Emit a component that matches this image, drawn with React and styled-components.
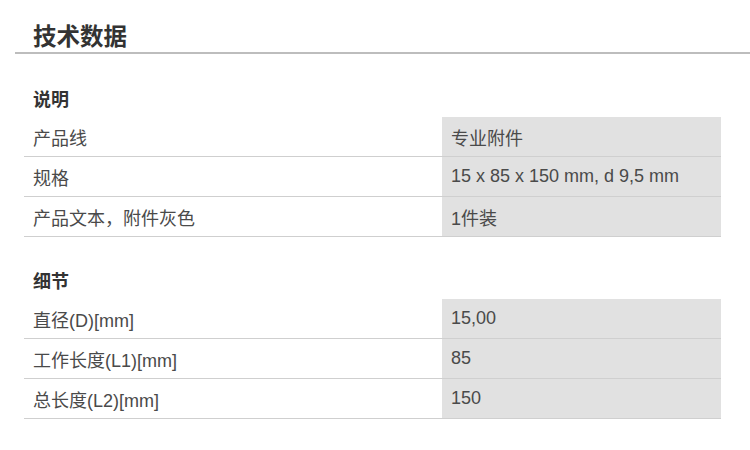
import React from 'react'
import styled, { createGlobalStyle } from 'styled-components'

const GlobalStyle = createGlobalStyle`
  body {
    margin: 0;
    background: #fff;
    font-family: "Liberation Sans", Arial, "Noto Sans CJK SC", sans-serif;
    color: #444;
  }
`

const Page = styled.div`
  width: 750px;
  height: 450px;
  overflow: hidden;
`

const Title = styled.h1`
  margin: 0 0 0 15px;
  padding: 22px 0 0 18px;
  font-size: 23.5px;
  line-height: 30px;
  font-weight: bold;
  color: #333;
  border-bottom: 2px solid #bdbdbd;
`

const SectionTitle = styled.h2`
  margin: ${({ first }) => (first ? '35px' : '34px')} 0 6px 33px;
  font-size: 18px;
  line-height: 22px;
  font-weight: bold;
  color: #333;
`

const Table = styled.div`
  margin-left: 24px;
  width: 697px;
  display: grid;
  grid-template-columns: 418px 279px;
`

const Cell = styled.div`
  height: 39px;
  display: flex;
  align-items: center;
  padding-left: 9px;
  font-size: 18px;
  color: #4a4a4a;
  border-bottom: 1px solid #cfcfcf;
  background: ${({ value }) => (value ? '#e1e1e1' : 'transparent')};
`

const sections = [
  {
    title: '说明',
    rows: [
      ['产品线', '专业附件'],
      ['规格', '15 x 85 x 150 mm, d 9,5 mm'],
      ['产品文本，附件灰色', '1件装'],
    ],
  },
  {
    title: '细节',
    rows: [
      ['直径(D)[mm]', '15,00'],
      ['工作长度(L1)[mm]', '85'],
      ['总长度(L2)[mm]', '150'],
    ],
  },
]

const App = () => {
  return (
    <Page>
      <GlobalStyle />
      <Title>技术数据</Title>
      {sections.map((section, i) => (
        <React.Fragment key={section.title}>
          <SectionTitle first={i === 0}>{section.title}</SectionTitle>
          <Table>
            {section.rows.map(([label, value]) => (
              <React.Fragment key={label}>
                <Cell>{label}</Cell>
                <Cell value>{value}</Cell>
              </React.Fragment>
            ))}
          </Table>
        </React.Fragment>
      ))}
    </Page>
  )
}

export default App
